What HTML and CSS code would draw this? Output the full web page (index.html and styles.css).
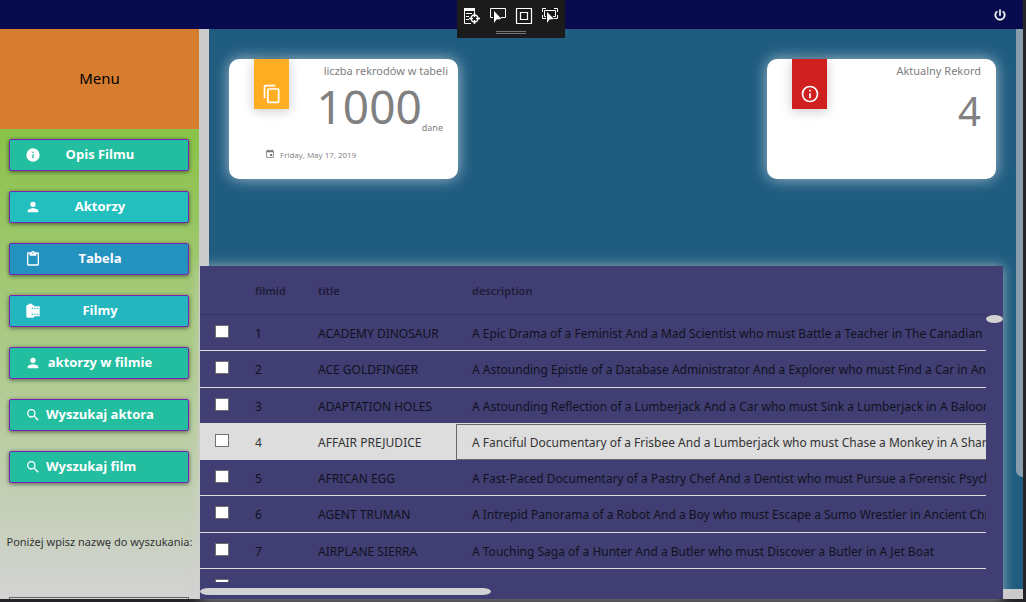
FILE: index.html
```html
<!DOCTYPE html>
<html lang="pl">
<head>
<meta charset="utf-8">
<title>Menu</title>
<link rel="stylesheet" href="styles.css">
</head>
<body>
<div class="window">
  <header class="topbar">
    <button class="power" type="button" aria-label="Zamknij">
      <svg viewBox="0 0 24 24"><path d="M13 3h-2v10h2V3zm4.83 2.17l-1.42 1.42A6.92 6.92 0 0 1 19 12a7 7 0 1 1-11.42-5.42L6.17 5.17A8.93 8.93 0 0 0 3 12a9 9 0 1 0 18 0c0-2.74-1.23-5.18-3.17-6.83z"/></svg>
    </button>
  </header>

  <div class="body">
    <aside class="sidebar">
      <div class="menu-title">Menu</div>
      <nav class="nav">
        <button class="nav-btn green" type="button">
          <svg viewBox="0 0 24 24"><path d="M12 2a10 10 0 1 0 0 20 10 10 0 0 0 0-20zm1 15h-2v-6h2v6zm0-8h-2V7h2v2z"/></svg><span>Opis Filmu</span></button>
        <button class="nav-btn cyan" type="button">
          <svg viewBox="0 0 24 24"><path d="M12 12a4 4 0 1 0 0-8 4 4 0 0 0 0 8zm0 2c-2.67 0-8 1.34-8 4v2h16v-2c0-2.66-5.33-4-8-4z"/></svg><span>Aktorzy</span></button>
        <button class="nav-btn blue" type="button">
          <svg viewBox="0 0 24 24"><path d="M19 2h-4.18C14.4.84 13.3 0 12 0S9.6.84 9.18 2H5a2 2 0 0 0-2 2v16c0 1.1.9 2 2 2h14a2 2 0 0 0 2-2V4a2 2 0 0 0-2-2zm-7 0a1 1 0 1 1 0 2 1 1 0 0 1 0-2zm7 18H5V4h2v3h10V4h2v16z"/></svg><span>Tabela</span></button>
        <button class="nav-btn teal" type="button">
          <svg viewBox="0 0 24 24"><path fill-rule="evenodd" d="M14 5c0-1.100-.9-2-2-2h-1V2a1 1 0 0 0-1-1H6a1 1 0 0 0-1 1v1H4a2 2 0 0 0-2 2v15c0 1.100.9 2 2 2h8a2 2 0 0 0 2-2h8V5h-8zm-2 13h-2v-2h2v2zm0-9h-2V7h2v2zm4 9h-2v-2h2v2zm0-9h-2V7h2v2zm4 9h-2v-2h2v2zm0-9h-2V7h2v2z"/></svg><span>Filmy</span></button>
        <button class="nav-btn green" type="button">
          <svg viewBox="0 0 24 24"><path d="M12 12a4 4 0 1 0 0-8 4 4 0 0 0 0 8zm0 2c-2.67 0-8 1.34-8 4v2h16v-2c0-2.66-5.33-4-8-4z"/></svg><span>aktorzy w filmie</span></button>
        <button class="nav-btn green" type="button">
          <svg viewBox="0 0 24 24"><path d="M15.500 14h-.79l-.28-.27A6.500 6.500 0 1 0 13.730 14.430l.27.28v.79l5 4.990L20.490 19l-4.990-5zm-6 0a4.500 4.500 0 1 1 0-9 4.500 4.500 0 0 1 0 9z"/></svg><span>Wyszukaj aktora</span></button>
        <button class="nav-btn green start" type="button">
          <svg viewBox="0 0 24 24"><path d="M15.500 14h-.79l-.28-.27A6.500 6.500 0 1 0 13.730 14.430l.27.28v.79l5 4.990L20.490 19l-4.990-5zm-6 0a4.500 4.500 0 1 1 0-9 4.500 4.500 0 0 1 0 9z"/></svg><span>Wyszukaj film</span></button>
      </nav>
      <label class="search-label" for="search">Poniżej wpisz nazwę do wyszukania:</label>
      <input class="search" id="search" type="text">
    </aside>

    <main class="main">
      <section class="cards">
        <article class="card">
          <div class="tag amber"><svg viewBox="0 0 24 24"><path d="M16 1H4a2 2 0 0 0-2 2v14h2V3h12V1zm3 4H8a2 2 0 0 0-2 2v14c0 1.100.9 2 2 2h11a2 2 0 0 0 2-2V7a2 2 0 0 0-2-2zm0 16H8V7h11v14z"/></svg></div>
          <div class="card-text">
            <h2>liczba rekrodów w tabeli</h2>
            <div class="total"><strong>1000</strong><small>dane</small></div>
          </div>
          <div class="date"><svg viewBox="0 0 24 24"><path d="M17 12h-5v5h5v-5zM16 1v2H8V1H6v2H5a2 2 0 0 0-2 2v14a2 2 0 0 0 2 2h14a2 2 0 0 0 2-2V5a2 2 0 0 0-2-2h-1V1h-2zm3 18H5V8h14v11z"/></svg>Friday, May 17, 2019</div>
        </article>
        <article class="card">
          <div class="tag red"><svg viewBox="0 0 24 24"><path d="M11 17h2v-6h-2v6zm1-15a10 10 0 1 0 0 20 10 10 0 0 0 0-20zm0 18a8 8 0 1 1 0-16 8 8 0 0 1 0 16zM11 9h2V7h-2v2z"/></svg></div>
          <div class="card-text current">
            <h2>Aktualny Rekord</h2>
            <strong>4</strong>
          </div>
        </article>
      </section>

      <section class="grid">
        <div class="viewport">
          <table>
            <colgroup><col class="c-check"><col class="c-id"><col class="c-title"><col></colgroup>
            <thead><tr><th></th><th>filmid</th><th>title</th><th>description</th></tr></thead>
            <tbody>
              <tr><td><input type="checkbox" aria-label="1"></td><td>1</td><td>ACADEMY DINOSAUR</td><td>A Epic Drama of a Feminist And a Mad Scientist who must Battle a Teacher in The Canadian Rockies</td></tr>
              <tr><td><input type="checkbox" aria-label="2"></td><td>2</td><td>ACE GOLDFINGER</td><td>A Astounding Epistle of a Database Administrator And a Explorer who must Find a Car in Ancient China</td></tr>
              <tr><td><input type="checkbox" aria-label="3"></td><td>3</td><td>ADAPTATION HOLES</td><td>A Astounding Reflection of a Lumberjack And a Car who must Sink a Lumberjack in A Baloon Factory</td></tr>
              <tr class="selected"><td><input type="checkbox" aria-label="4"></td><td>4</td><td>AFFAIR PREJUDICE</td><td class="focus">A Fanciful Documentary of a Frisbee And a Lumberjack who must Chase a Monkey in A Shark Tank</td></tr>
              <tr><td><input type="checkbox" aria-label="5"></td><td>5</td><td>AFRICAN EGG</td><td>A Fast-Paced Documentary of a Pastry Chef And a Dentist who must Pursue a Forensic Psychologist in The Gulf of Mexico</td></tr>
              <tr><td><input type="checkbox" aria-label="6"></td><td>6</td><td>AGENT TRUMAN</td><td>A Intrepid Panorama of a Robot And a Boy who must Escape a Sumo Wrestler in Ancient China</td></tr>
              <tr><td><input type="checkbox" aria-label="7"></td><td>7</td><td>AIRPLANE SIERRA</td><td>A Touching Saga of a Hunter And a Butler who must Discover a Butler in A Jet Boat</td></tr>
              <tr><td><input type="checkbox" aria-label="8"></td><td></td><td></td><td></td></tr>
            </tbody>
          </table>
        </div>
        <div class="vtrack"><div class="thumb"></div></div>
        <div class="htrack"><div class="thumb"></div></div>
      </section>
      <div class="page-scroll"></div>
    </main>
  </div>
</div>

<div class="debugbar">
  <div class="tools">
    <svg viewBox="0 0 18 18"><path fill="#fff" d="M1 1h11v3H1z"/><path fill="none" stroke="#fff" d="M1.500 4v12.500H8M11.500 4v2M3 6.500h6M3 9.500h3M3 12.500h3"/><circle cx="11.500" cy="11.500" r="3.500" fill="none" stroke="#fff" stroke-width="1.400"/><path stroke="#fff" stroke-width="1.400" d="M11.500 6v4M11.500 13v4M6 11.500h4M13 11.500h4"/></svg>
    <svg viewBox="0 0 18 18"><path fill="none" stroke="#fff" d="M4 10.500H1.500v-9h15v9H12"/><path fill="#fff" d="M5 4v12l2.500-3.500L12.500 12z"/></svg>
    <svg viewBox="0 0 18 18"><path fill="none" stroke="#fff" stroke-width="1.200" d="M1.500 1.500h15v15h-15zM5.500 5.500h7v7h-7z"/></svg>
    <svg viewBox="0 0 18 18"><path fill="none" stroke="#fff" d="M1.500 5V1.500H5M13 1.500h3.500V5M1.500 8v3.500H5M16.500 8v3.500H13M5 9.500H3.500v-6h11v6H12"/><path fill="#fff" d="M6 5v11l2.500-3.500L13 12z"/></svg>
  </div>
  <div class="grip"></div>
</div>
</body>
</html>
```
FILE: styles.css
```css
* { box-sizing: border-box; }

body {
  margin: 0;
  height: 100vh;
  overflow: hidden;
  background: #252528;
  font-family: "Noto Sans", "Open Sans", sans-serif;
}

button { font: inherit; cursor: pointer; }

.window {
  display: flex;
  flex-direction: column;
  height: 100vh;
  padding: 0 3px 3px 0;
}

.topbar {
  display: flex;
  flex: none;
  justify-content: flex-end;
  align-items: center;
  height: 29px;
  padding-right: 16px;
  background: #080b4e;
}

.power {
  display: flex;
  padding: 0;
  border: 0;
  background: none;
}

.power svg { width: 14px; height: 14px; fill: #fff; stroke: #fff; }

.body { display: flex; flex: 1; min-height: 0; }

/* Sidebar */
.sidebar {
  display: flex;
  flex: none;
  flex-direction: column;
  width: 199px;
  overflow: hidden;
  background: linear-gradient(#8bc34a 110px, #d3d3d3);
}

.menu-title {
  display: flex;
  flex: none;
  align-items: center;
  justify-content: center;
  height: 100px;
  padding-bottom: 2px;
  background: #d67d30;
  color: #000;
  font-size: 15px;
}

.nav {
  display: flex;
  flex: none;
  flex-direction: column;
  gap: 20px;
  padding: 10px 10px 0 9px;
}

.nav-btn {
  display: flex;
  align-items: center;
  gap: 5px;
  height: 32px;
  padding: 0 34px 0 15px;
  border: 1px solid #7a22b5;
  border-radius: 2px;
  box-shadow: 0 1px 4px rgba(0, 0, 0, .55);
  color: #fff;
  font-family: "Open Sans", "Noto Sans", sans-serif;
  font-size: 13px;
  font-weight: 700;
  white-space: nowrap;
}

.nav-btn svg { flex: none; width: 16px; height: 16px; fill: #fff; }
.nav-btn span { flex: 1; padding-bottom: 2px; text-align: center; }
.nav-btn.start span { text-align: left; }
.green { background: #23bd9f; }
.cyan { background: #23bfbf; }
.blue { background: #2392bf; }
.teal { background: #23b6bf; }

.search-label {
  flex: none;
  padding: 50px 0 46px;
  color: #333;
  font-size: 11px;
  line-height: 18px;
  text-align: center;
  white-space: nowrap;
}

.search {
  flex: none;
  height: 24px;
  margin: 0 10px 0 9px;
  border: 1px solid #666;
  background: #d3d3d3;
}

/* Main area */
.main {
  position: relative;
  display: flex;
  flex: 1;
  flex-direction: column;
  min-width: 0;
  border: solid #cbcbcb;
  border-width: 0 0 10px 10px;
  background: #1f5c80;
}

.page-scroll {
  position: absolute;
  top: 0;
  right: 0;
  width: 7px;
  height: 80%;
  border-bottom-left-radius: 7px;
  background: #879dae;
}

.cards {
  display: flex;
  flex: none;
  justify-content: space-between;
  align-items: flex-start;
  height: 237px;
  padding: 30px 27px 0 20px;
}

.card {
  display: grid;
  grid-template-columns: 35px 1fr;
  grid-template-rows: 90px 1fr;
  width: 229px;
  height: 120px;
  padding: 0 10px 0 25px;
  border-radius: 10px;
  background: #fff;
  box-shadow: 0 0 15px rgba(255, 255, 255, .6);
  color: #808080;
}

.tag {
  display: flex;
  align-items: flex-end;
  justify-content: center;
  height: 50px;
  padding-bottom: 5px;
  box-shadow: 0 2px 12px rgba(0, 0, 0, .22);
}

.tag svg { width: 20px; height: 20px; fill: #fff; }
.amber { background: #ffae23; }
.red { background: #d01f1f; }

.card-text { text-align: right; }
.card-text h2 {
  margin: 0;
  padding-top: 4px;
  font-size: 11px;
  font-weight: 400;
  line-height: 16px;
  white-space: nowrap;
}
.card-text strong { font-weight: 400; }

.total {
  display: flex;
  align-items: flex-end;
  justify-content: flex-end;
  padding-right: 5px;
}
.total strong { font-size: 46px; line-height: 54px; }
.total small { font-size: 9px; line-height: 10px; }

.current { padding-right: 5px; }
.current strong { font-size: 40px; line-height: 64px; }

.date {
  display: flex;
  grid-column: 1 / -1;
  align-items: flex-start;
  gap: 5px;
  padding-left: 11px;
  font-family: "Open Sans", "Noto Sans", sans-serif;
  font-size: 8px;
  line-height: 12px;
}
.date svg { width: 10px; height: 10px; fill: #777; }

/* Data grid */
.grid {
  display: grid;
  flex: 1;
  grid-template-columns: minmax(0, 1fr) 17px;
  grid-template-rows: minmax(0, 1fr) 17px;
  min-height: 0;
  margin: 0 20px -10px -9px;
  background: #403e72;
  box-shadow: 0 0 12px rgba(211, 211, 211, .7);
}

.viewport { overflow: hidden; }

table {
  width: 100%;
  table-layout: fixed;
  border-collapse: separate;
  border-spacing: 0;
  color: #12121f;
  font-size: 12px;
}

.c-check { width: 39px; }
.c-id { width: 63px; }
.c-title { width: 154px; }

th, td {
  height: 36px;
  padding: 2px 0 0 16px;
  border-bottom: 1px solid #ddd;
  overflow: hidden;
  line-height: 18px;
  text-align: left;
  white-space: nowrap;
}

tbody tr:nth-child(4n + 2) td { height: 37px; }

th {
  height: 49px;
  border-bottom-color: #343363;
  color: #1e1d38;
  font-size: 11px;
  font-weight: 600;
}

.selected { background: #ddd; color: #333; }
.focus { border: 1px solid #666; border-right: 0; padding-left: 15px; }

td:first-child { padding: 0 0 0 15px; }

input[type="checkbox"] {
  display: block;
  width: 14px;
  height: 13px;
  margin: 0 0 3px;
  appearance: none;
  border: 1px solid #707070;
  background: #fff;
}

.vtrack { padding-top: 49px; }
.thumb { background: #d3d3d3; border-radius: 50%; }
.vtrack .thumb { width: 17px; height: 8px; }
.htrack { padding-top: 6px; }
.htrack .thumb { width: 37%; height: 7px; border-radius: 10px / 4px; }

/* Floating debugger toolbar */
.debugbar {
  position: absolute;
  top: 0;
  left: 457px;
  display: flex;
  flex-direction: column;
  align-items: center;
  gap: 6px;
  width: 108px;
  height: 38px;
  padding-top: 7px;
  background: #1b1b1b;
}

.tools { display: flex; gap: 8px; }
.tools svg { width: 18px; height: 18px; }
.grip {
  width: 30px;
  height: 3px;
  border: solid #777;
  border-width: 1px 0;
}
```
